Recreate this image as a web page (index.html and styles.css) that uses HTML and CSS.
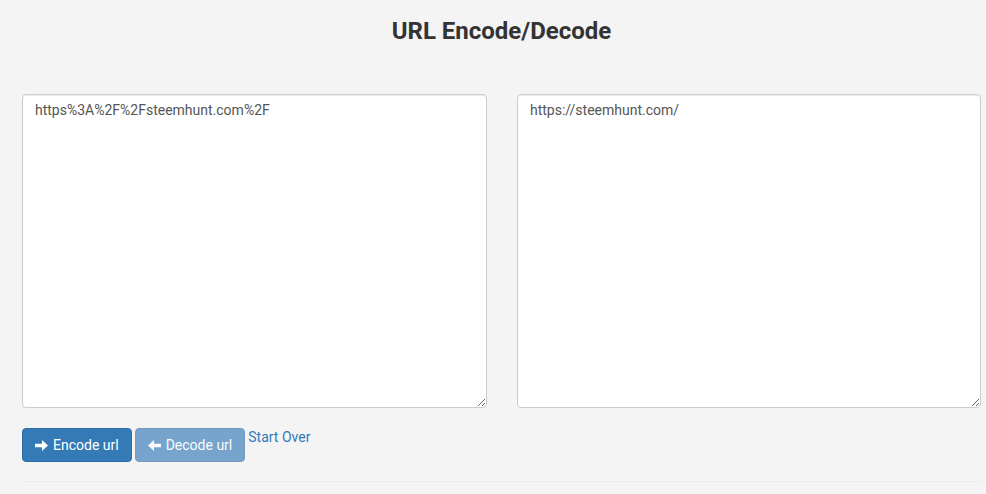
FILE: index.html
```html
<!DOCTYPE html>
<html>
<head>
<meta charset="utf-8">
<link rel="stylesheet" href="styles.css">
</head>
<body>
<div class="page">
  <h1 class="title">URL Encode/Decode</h1>
  <div class="panes">
    <textarea class="box">https%3A%2F%2Fsteemhunt.com%2F</textarea>
    <textarea class="box">https://steemhunt.com/</textarea>
  </div>
  <div class="actions">
    <button class="btn">
      <svg class="ico" viewBox="0 0 14 14"><path d="M0 5h7.5V1.2L14 7l-6.5 5.8V9H0z" fill="#fff"/></svg>
      Encode url
    </button>
    <button class="btn btn-dim">
      <svg class="ico" viewBox="0 0 14 14"><path d="M14 5H6.5V1.2L0 7l6.5 5.8V9H14z" fill="#fff"/></svg>
      Decode url
    </button>
    <a class="link" href="#">Start Over</a>
  </div>
  <hr class="rule">
</div>
</body>
</html>
```

FILE: styles.css
```css
html, body {
  margin: 0;
  padding: 0;
  background: #f4f4f4;
  font-family: Roboto, "Liberation Sans", sans-serif;
}
.page {
  width: 959px;
  padding-left: 22px;
}
.title {
  margin: 0;
  padding-top: 16px;
  height: 94px;
  box-sizing: border-box;
  text-align: center;
  font-size: 24px;
  font-weight: 700;
  color: #333;
  line-height: 30px;
}
.panes {
  display: grid;
  grid-template-columns: 465px 464px;
  column-gap: 30px;
}
.box {
  display: block;
  box-sizing: border-box;
  width: 100%;
  height: 314px;
  margin: 0;
  padding: 5px 12px;
  border: 1px solid #ccc;
  border-radius: 4px;
  background: #fff;
  box-shadow: inset 0 1px 1px rgba(0,0,0,.075);
  font-family: Roboto, "Liberation Sans", sans-serif;
  font-size: 14px;
  line-height: 20px;
  color: #555;
  resize: both;
}
.actions {
  display: flex;
  align-items: flex-start;
  gap: 3px;
  margin-top: 20px;
}
.btn {
  display: flex;
  align-items: center;
  gap: 5px;
  height: 34px;
  padding: 0 12px;
  border: 1px solid #2e6da4;
  border-radius: 4px;
  background: #337ab7;
  color: #fff;
  font-family: Roboto, "Liberation Sans", sans-serif;
  font-size: 14px;
}
.btn-dim {
  opacity: .65;
}
.ico {
  width: 13px;
  height: 13px;
}
.link {
  color: #337ab7;
  text-decoration: none;
  font-size: 14px;
  line-height: 20px;
  margin-top: -1px;
}
.rule {
  margin: 19px 0 0;
  border: 0;
  border-top: 1px solid #eaeaea;
}
```
